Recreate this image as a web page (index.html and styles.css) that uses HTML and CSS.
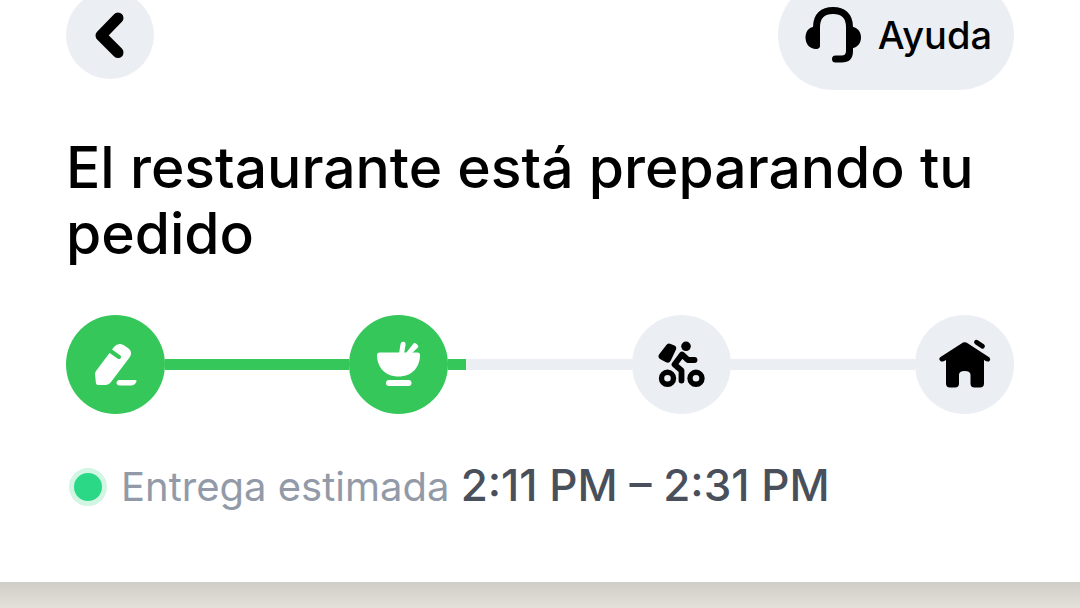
FILE: index.html
```html
<!DOCTYPE html>
<html lang="es">
<head>
    <meta charset="UTF-8">
    <meta name="viewport" content="width=device-width, initial-scale=1.0">
    <title>Seguimiento del pedido</title>
    <link rel="stylesheet" href="styles.css">
</head>
<body>

    <main class="tarjeta">
        <!-- Barra superior -->
        <header class="barra">
            <button type="button" class="volver" aria-label="Volver">
                <svg viewBox="0 0 88 88" aria-hidden="true">
                    <path class="trazo" stroke-width="11" d="M52 27L35 44.500L52 61.500"/>
                </svg>
            </button>
            <button type="button" class="ayuda">
                <svg viewBox="0 0 56 56" aria-hidden="true">
                    <path class="trazo" stroke-width="7" d="M11.500 38V20C11.500 9 18 3.500 28 3.500S44.500 9 44.500 20V44Q44.500 52 36.500 52H30.500"/>
                    <path d="M9 19.500C3 21 .5 25 .5 30.500C.5 37 4.500 42 11 42Q15 42 15 38V19.500Z"/>
                    <path d="M47 19.500C53 21 56 25 56 30.500C56 36 53 40 47 41.500H41V19.500Z"/>
                </svg>
                <span>Ayuda</span>
            </button>
        </header>

        <h1>El restaurante está preparando tu pedido</h1>

        <!-- Progreso del pedido -->
        <div class="progreso">
            <div class="paso hecho">
                <svg viewBox="0 0 99 99" aria-hidden="true">
                    <path d="M30 56L48 32Q52 27 57.500 30L62 33Q67.500 37 63.500 42.500L45 67Q43 70 40 70H32Q30 70 29.800 67L29 59Q29 57.500 30 56Z"/>
                    <path class="ranura" d="M44.500 36L53 42"/>
                    <path d="M53.500 65H69Q71.500 65 70 67.500Q68.500 70.500 65 70.500H53.500Q50.500 70 50.500 67.700Q50.500 65.500 53.500 65Z"/>
                </svg>
            </div>
            <div class="tramo completo"></div>
            <div class="paso hecho">
                <svg viewBox="0 0 99 99" aria-hidden="true">
                    <path d="M30.500 37.500H68.500Q71 37.500 71 40C71 53 62 61.500 49.500 61.500S28 53 28 40Q28 37.500 30.500 37.500Z"/>
                    <path d="M50 39L51.500 29Q52 26.500 54.500 26.700Q57 27 56.500 30L55 39Z"/>
                    <path d="M57 38L64.500 28.500Q65.500 27.500 67 28.500L69 30.500Q70 32 68.500 33L63 38Z"/>
                    <rect x="37" y="65" width="25.500" height="6" rx="3"/>
                </svg>
            </div>
            <div class="tramo parcial"></div>
            <div class="paso">
                <svg viewBox="0 0 99 99" aria-hidden="true">
                    <circle cx="54" cy="31.300" r="4.800"/>
                    <path d="M34 30.500Q35.500 28 38 28.800L42.500 30.500Q45 32 44 34.500L38.800 45.500Q37 49 33.500 47L28 44Q25.500 42 27 39.500Z"/>
                    <path class="trazo" stroke-width="5.800" d="M62.500 45H56L50 39.500L42.500 49.500L49.500 55.500V65.500"/>
                    <circle class="trazo" cx="35.500" cy="63.300" r="6" stroke-width="5.400"/>
                    <circle class="trazo" cx="64" cy="63.300" r="6" stroke-width="5.400"/>
                </svg>
            </div>
            <div class="tramo"></div>
            <div class="paso">
                <svg viewBox="0 0 99 99" aria-hidden="true">
                    <path d="M46.500 28.500Q49.500 26 53 28.500L74.500 42.500Q76 44.500 74.500 46Q73 47.500 69 45V68.500Q69 72.500 65 72.500H59.500Q55.500 72.500 55.500 68.500V60Q55.500 56 49.700 56T44 60V68.500Q44 72.500 40 72.500H35Q31 72.500 31 68.500V45Q27 47.500 25.500 46Q23 44 25.500 42Z"/>
                    <path class="trazo" stroke-width="4.800" d="M61.500 27.200L67.500 31.200"/>
                </svg>
            </div>
        </div>

        <!-- Hora estimada -->
        <div class="entrega">
            <span class="punto"></span>
            <p>Entrega estimada <strong>2:11 PM – 2:31 PM</strong></p>
        </div>
    </main>

    <!-- Mapa, bajo la sombra de la tarjeta -->
    <div class="mapa"></div>

</body>
</html>
```
FILE: styles.css
```css
* {
    box-sizing: border-box;
}
body {
    display: flex;
    flex-direction: column;
    min-height: 100vh;
    font-family: Inter, sans-serif;
    background-color: #e5e2da;
    margin: 0;
}
.tarjeta {
    display: flow-root;
    background-color: #fff;
    padding: 0 66px 68px;
}
.mapa {
    flex: 1;
    background: linear-gradient(#cfcdc7, #e5e2da 28px);
}
.barra {
    display: flex;
    justify-content: space-between;
    align-items: center;
    margin-top: -20px;
}
button {
    font-family: inherit;
    color: #000;
    background-color: #ebeff4;
    border: none;
    padding: 0;
    cursor: pointer;
}
svg {
    display: block;
    fill: currentColor;
}
.trazo {
    fill: none;
    stroke: currentColor;
    stroke-linecap: round;
    stroke-linejoin: round;
}
.ranura {
    fill: none;
    stroke: #35c759;
    stroke-width: 4;
    stroke-linecap: round;
}
.volver {
    width: 88px;
    height: 88px;
    border-radius: 50%;
}
.ayuda {
    display: flex;
    align-items: center;
    gap: 17px;
    height: 110px;
    padding: 0 22px 0 27px;
    border-radius: 55px;
    font-size: 38px;
    font-weight: 500;
}
.ayuda svg {
    width: 56px;
    height: 56px;
}
h1 {
    margin: 45px 0 48px;
    font-size: 57px;
    line-height: 66px;
    font-weight: 500;
}
.progreso {
    display: flex;
    align-items: center;
}
.paso {
    flex: none;
    width: 99px;
    height: 99px;
    border-radius: 50%;
    background-color: #ebeff4;
}
.hecho {
    background-color: #35c759;
    color: #fff;
}
.tramo {
    flex: 1;
    height: 11px;
    background-color: #ebeff4;
}
.completo {
    background-color: #35c759;
}
.parcial {
    background-image: linear-gradient(to right, #35c759 10%, transparent 10%);
}
.entrega {
    display: flex;
    align-items: center;
    gap: 14px;
    margin-top: 46px;
    padding-left: 3px;
}
.punto {
    flex: none;
    width: 38px;
    height: 38px;
    border: 5px solid #d3f6e4;
    border-radius: 50%;
    background-color: #2ad886;
}
.entrega p {
    margin: 0;
    font-size: 40px;
    line-height: 54px;
    color: #929aa8;
}
.entrega strong {
    font-size: 44px;
    line-height: 1;
    font-weight: 500;
    color: #4a505b;
}
```
